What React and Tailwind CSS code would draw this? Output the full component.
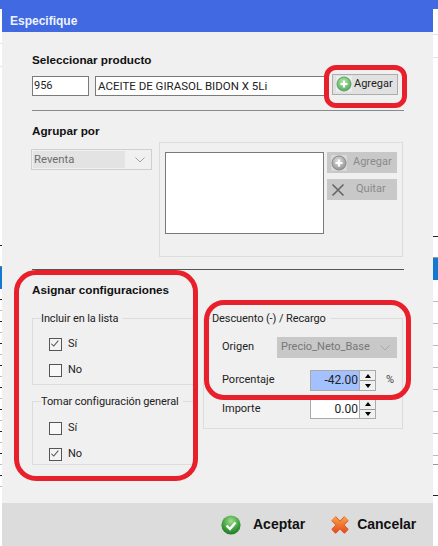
const STRIP_LEFT = [
  [35, "#e4e4e4"], [23, "#e4e4e4"], [179, "#222222"], [21, "#777777"], [22, "#1478d2"],
  [11, "#222222"], [11, "#bbbbbb"], [11, "#222222"], [11, "#bbbbbb"], [11, "#222222"], [11, "#bbbbbb"],
  [11, "#222222"], [11, "#bbbbbb"], [11, "#222222"], [11, "#bbbbbb"], [11, "#222222"], [11, "#bbbbbb"],
  [11, "#222222"], [11, "#bbbbbb"], [11, "#222222"], [11, "#bbbbbb"], [11, "#222222"], [11, "#bbbbbb"],
];
const STRIP_RIGHT = [
  [26, "#e4e4e4"], [23, "#e4e4e4"], [179, "#222222"], [21, "#999999"], [22, "#1478d2"],
  [22, "#bbbbbb"], [22, "#bbbbbb"], [22, "#bbbbbb"], [22, "#bbbbbb"], [22, "#bbbbbb"], [22, "#bbbbbb"],
  [22, "#bbbbbb"], [22, "#bbbbbb"], [9, "#999999"], [31, "#222222"],
];

function Strip({ rows, width }) {
  return (
    <div className="flex flex-col shrink-0 bg-white" style={{ width }}>
      {rows.map(([h, color], i) => (
        <div
          key={i}
          style={{
            height: h,
            background: color === "#1478d2" ? color : undefined,
            borderBottom: color === "#1478d2" ? undefined : `1px solid ${color}`,
          }}
        />
      ))}
    </div>
  );
}

function PlusIcon({ disabled }) {
  const id = disabled ? "plusGray" : "plusGreen";
  return (
    <svg width="16" height="16" viewBox="0 0 16 16" className={`shrink-0 ${disabled ? "bg-[#d8d8d8]" : "bg-[#e8efe8]"}`}>
      <defs>
        <radialGradient id={id} cx="45%" cy="35%" r="70%">
          <stop offset="0%" stopColor={disabled ? "#e0e0e0" : "#b8e6a8"} />
          <stop offset="100%" stopColor={disabled ? "#8e8e8e" : "#4da65a"} />
        </radialGradient>
      </defs>
      <circle cx="8" cy="8" r="7" fill={`url(#${id})`} stroke={disabled ? "#8a8a8a" : "#5d9f6a"} />
      <path d="M8 4.5v7M4.5 8h7" stroke="#fff" strokeWidth="2.2" />
    </svg>
  );
}

function Check() {
  return (
    <svg width="13" height="13" viewBox="0 0 13 13" className="shrink-0 border border-[#555555] bg-[#f4f4f4]">
      <path d="M1.6 5.6 4.400 8.400 9.800 2" fill="none" stroke="#555555" strokeWidth="1.2" />
    </svg>
  );
}

function CheckRow({ label, checked, className }) {
  return (
    <div className={`flex items-center gap-[6px] pl-[16px] ${className}`}>
      {checked ? <Check /> : <div className="w-[13px] h-[13px] border border-[#555555] bg-[#f8f8f8] shrink-0" />}
      <span className="text-[11px] leading-[14px] text-[#222222]">{label}</span>
    </div>
  );
}

function Chevron({ color }) {
  return (
    <svg width="10" height="6" viewBox="0 0 10 6" className="shrink-0">
      <path d="M.5.5 5 5 9.5.5" fill="none" stroke={color} />
    </svg>
  );
}

function Spin() {
  return (
    <div className="flex flex-col w-[16px] self-stretch border-l border-[#aaaaaa] bg-[#f0f0f0] shrink-0">
      <div className="flex-1 flex items-center justify-center border-b border-[#999999]">
        <div className="w-0 h-0 border-x-[3px] border-x-transparent border-b-[4px] border-b-black" />
      </div>
      <div className="flex-1 flex items-center justify-center">
        <div className="w-0 h-0 border-x-[3px] border-x-transparent border-t-[4px] border-t-black" />
      </div>
    </div>
  );
}

function Group({ title, className, children }) {
  return (
    <fieldset className={`border border-[#dcdcdc] ${className}`}>
      <legend className="ml-[8px] pr-[4px] pt-[1px] whitespace-nowrap text-[11px] tracking-[-0.1px] leading-[14px] text-[#222222]">{title}</legend>
      {children}
    </fieldset>
  );
}

function Frame({ className }) {
  return <div className={`absolute border-[5px] border-[#e8202c] pointer-events-none ${className}`} />;
}

export default function App() {
  return (
    <div
      className="relative w-[438px] h-[546px] overflow-hidden bg-white flex flex-col"
      style={{ fontFamily: 'Roboto, "Liberation Sans", Arial, sans-serif' }}
    >
      <div className="h-[9px] bg-[#4169e1] shrink-0" />
      <div className="flex flex-1 min-h-0">
        <Strip rows={STRIP_LEFT} width={2} />
        <div className="w-[431px] flex flex-col bg-[#f0f0f0]">
          <div className="h-[23px] bg-[#4169e1] flex items-center pl-[8px] text-[12px] font-bold text-[#eef2ff] shrink-0 font-['Liberation_Sans']">
            Especifique
          </div>

          <div className="flex-1 pl-[30px] pr-[29px]">
            <h2 className="mt-[21px] text-[11.7px] leading-[14px] font-bold text-[#111111] font-['Liberation_Sans']">Seleccionar producto</h2>
            <div className="flex items-center mt-[8px] h-[21px]">
              <div className="w-[57px] h-[20px] border border-[#7a7a7a] bg-white pl-[1px] text-[11px] leading-[18px] text-[#222222]">956</div>
              <div className="w-[230px] h-[20px] ml-[6px] border border-[#7a7a7a] bg-white pl-[2px] text-[11.500px] leading-[18px] text-[#222222]">ACEITE DE GIRASOL BIDON X 5Li</div>
              <button className="w-[66px] h-[21px] ml-[7px] -mt-[3px] flex items-center pl-[3px] gap-[2px] border border-[#adadad] bg-[#e1e1e1] text-[11px] text-[#222222]">
                <PlusIcon />
                Agregar
              </button>
            </div>
            <div className="h-px bg-[#8a8a8a] mt-[14px]" />

            <h2 className="mt-[13px] text-[11.7px] leading-[14px] font-bold text-[#111111] font-['Liberation_Sans']">Agrupar por</h2>
            <div className="flex mt-[4px] -ml-[1px]">
              <div className="w-[121px] h-[21px] mt-[7px] border border-[#cfcfcf] bg-[#f0f0f0] flex items-center p-[1px] pr-[6px] shrink-0">
                <div className="flex-1 h-full bg-[#e3e3e3] pl-[1px] text-[11.300px] leading-[17px] text-[#6d6d6d]">Reventa</div>
                <div className="w-[20px] flex justify-end"><Chevron color="#a0a0a0" /></div>
              </div>
              <div className="w-[244px] h-[115px] ml-[7px] border border-[#dcdcdc] flex pl-[5px] pt-[9px]">
                <div className="w-[159px] h-[82px] border border-[#7a7a7a] bg-white shrink-0" />
                <div className="flex flex-col gap-[6px] ml-[3px]">
                  <button className="w-[70px] h-[21px] bg-[#c8c8c8] flex items-center pl-[4px] gap-[6px] text-[11px] text-[#8a8a8a]">
                    <PlusIcon disabled />
                    Agregar
                  </button>
                  <button className="w-[70px] h-[21px] bg-[#c8c8c8] flex items-center pl-[4px] gap-[11px] text-[11px] text-[#8a8a8a]">
                    <svg width="14" height="14" viewBox="0 0 14 14" className="shrink-0">
                      <path d="M1.5 1.500l11 11M12.500 1.500l-11 11" stroke="#666666" strokeWidth="1.6" />
                    </svg>
                    Quitar
                  </button>
                </div>
              </div>
            </div>
            <div className="h-px bg-[#555555] mt-[12px]" />

            <div className="flex">
              <div className="w-[162px] shrink-0">
                <h2 className="mt-[13px] text-[11.7px] leading-[14px] font-bold text-[#111111] font-['Liberation_Sans']">Asignar configuraciones</h2>
                <Group title="Incluir en la lista" className="mt-[14px] h-[74px]">
                  <CheckRow label="Sí" checked className="mt-[11px]" />
                  <CheckRow label="No" className="mt-[12px]" />
                </Group>
                <Group title="Tomar configuración general" className="mt-[9px] h-[71px]">
                  <CheckRow label="Sí" className="mt-[12px]" />
                  <CheckRow label="No" checked className="mt-[12px]" />
                </Group>
              </div>

              <Group title="Descuento (-) / Recargo" className="w-[200px] h-[118px] ml-[9px] mt-[41px]">
                <div className="flex items-center h-[21px] mt-[11px] pl-[18px]">
                  <span className="w-[55px] text-[11px] text-[#222222]">Origen</span>
                  <div className="w-[120px] h-full bg-[#c8c8c8] flex items-center justify-between pl-[4px] pr-[7px] text-[11px] text-[#777777]">
                    Precio_Neto_Base
                    <Chevron color="#a8a8a8" />
                  </div>
                </div>
                <div className="flex items-center h-[21px] mt-[12px] pl-[18px]">
                  <span className="w-[88px] text-[11px] text-[#222222]">Porcentaje</span>
                  <div className="w-[66px] h-full border border-[#aaaaaa] flex">
                    <div className="flex-1 bg-[#a4c1ff] text-right pr-[1px] text-[12px] leading-[19px] text-[#222222]">-42.00</div>
                    <Spin />
                  </div>
                  <span className="ml-[10px] text-[11px] text-[#444444]">%</span>
                </div>
                <div className="flex items-center h-[20px] mt-[8px] pl-[18px]">
                  <span className="w-[88px] text-[11px] text-[#222222]">Importe</span>
                  <div className="w-[66px] h-full border border-[#aaaaaa] bg-white flex">
                    <div className="flex-1 text-right pr-[1px] text-[12px] leading-[18px] text-[#222222]">0.00</div>
                    <Spin />
                  </div>
                </div>
              </Group>
            </div>
          </div>

          <div className="h-[43px] bg-[#dcdcdc] flex items-center pl-[219px] shrink-0 font-['Liberation_Sans']">
            <svg width="20" height="20" viewBox="0 0 20 20" className="shrink-0">
              <defs>
                <radialGradient id="okGreen" cx="50%" cy="30%" r="75%">
                  <stop offset="0%" stopColor="#9fdc8e" />
                  <stop offset="60%" stopColor="#3f9f3c" />
                  <stop offset="100%" stopColor="#1c6e22" />
                </radialGradient>
              </defs>
              <circle cx="10" cy="10" r="9.6" fill="url(#okGreen)" />
              <path d="M5.500 10.500 9 14l5.500-6.500" fill="none" stroke="#fff" strokeWidth="2.4" />
            </svg>
            <span className="ml-[12px] text-[14px] font-bold text-[#111111]">Aceptar</span>
            <svg width="20" height="20" viewBox="0 0 20 20" className="ml-[25px] shrink-0">
              <defs>
                <linearGradient id="noRed" gradientUnits="userSpaceOnUse" x1="0" y1="0" x2="0" y2="20">
                  <stop offset="0%" stopColor="#fbab4a" />
                  <stop offset="100%" stopColor="#e2401c" />
                </linearGradient>
              </defs>
              <path d="M3.500 3.500l13 13M16.500 3.500l-13 13" stroke="#d9501e" strokeWidth="6.200" />
              <path d="M3.500 3.500l13 13M16.500 3.500l-13 13" stroke="url(#noRed)" strokeWidth="5" />
            </svg>
            <span className="ml-[7px] text-[14px] font-bold text-[#111111]">Cancelar</span>
          </div>
        </div>
        <Strip rows={STRIP_RIGHT} width={5} />
      </div>

      <Frame className="left-[324px] top-[65px] w-[83px] h-[43px] rounded-[12px]" />
      <Frame className="left-[14px] top-[270px] w-[184px] h-[211px] rounded-[22px]" />
      <Frame className="left-[204px] top-[300px] w-[207px] h-[100px] rounded-[20px]" />
    </div>
  );
}
